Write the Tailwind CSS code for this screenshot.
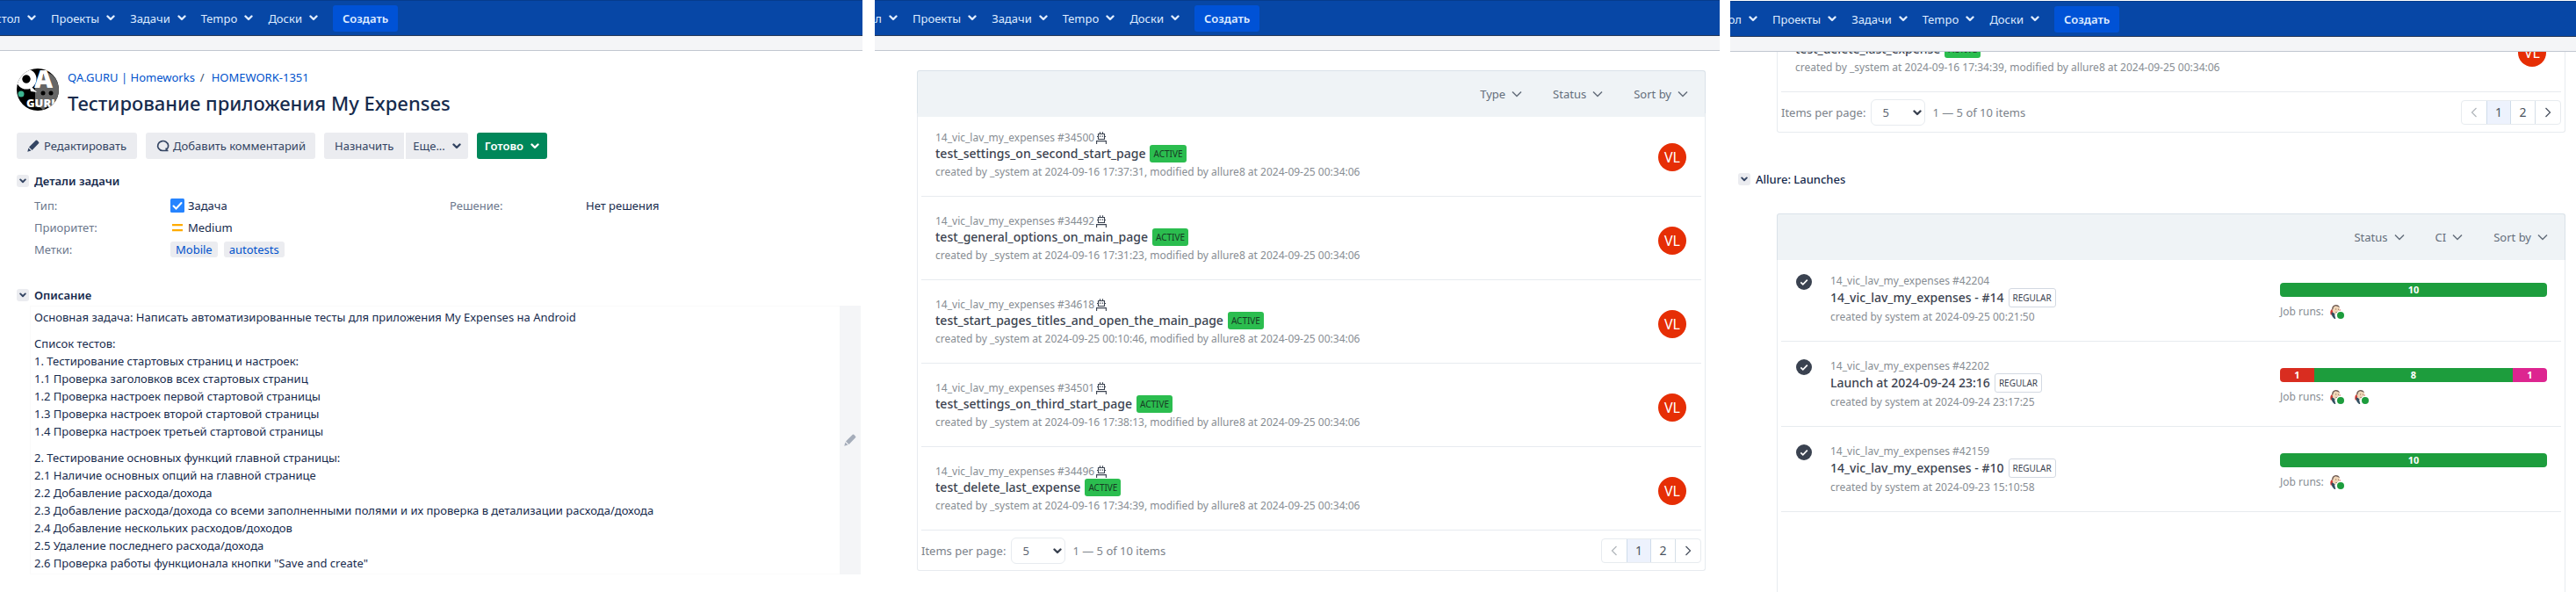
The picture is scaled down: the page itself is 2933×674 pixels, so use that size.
<!DOCTYPE html>
<html lang="ru">
<head>
<meta charset="utf-8">
<title>HOMEWORK-1351</title>
<script src="https://cdn.jsdelivr.net/npm/@tailwindcss/browser@4"></script>
</head>
<body class="bg-white font-['Noto_Sans','Open_Sans',sans-serif] text-[13px] leading-5 text-[#172b4d]">
<svg width="0" height="0" class="absolute" aria-hidden="true">
  <symbol id="chev" viewBox="0 0 10 7"><path d="M1.5 1.5 5 5l3.500-3.500" fill="none" stroke="currentColor" stroke-width="2.400" stroke-linecap="round" stroke-linejoin="round"/></symbol>
  <symbol id="thin" viewBox="0 0 12 8"><path d="M1 1.500 6 6.500l5-5" fill="none" stroke="currentColor" stroke-width="1.500"/></symbol>
  <symbol id="pencil" viewBox="0 0 14 14"><path d="M9.300 1.200a1.500 1.500 0 0 1 2.200-.1l1.300 1.300a1.500 1.500 0 0 1 0 2.200L5.600 12 2 8.400zM1.400 9.500l3.100 3.100L.3 13.700z" fill="currentColor"/></symbol>
  <symbol id="comment" viewBox="0 0 16 14"><path d="M12.800 11A6 5.500 0 1 0 8 12.500h6.500M12.300 9.500v3" fill="none" stroke="currentColor" stroke-width="1.700"/></symbol>
  <symbol id="robot" viewBox="0 0 12 14"><path d="M2.500 2.500h7v6h-7zM4.500.2v2.300M7.500.2v2.300M1 5.500h1.500M9.500 5.500H11M.6 14v-3.400h10.800V14" fill="none" stroke="currentColor" stroke-width="1.100"/><path d="M4 4.500h1.300v1.300H4zM6.700 4.500H8v1.300H6.700z" fill="currentColor"/></symbol>
  <symbol id="done" viewBox="0 0 18 18"><circle cx="9" cy="9" r="9" fill="#3a4250"/><path d="m5.300 9.300 2.500 2.500 5-5.200" fill="none" stroke="#fff" stroke-width="1.700"/></symbol>
  <symbol id="jenkins" viewBox="0 0 16 16">
    <path d="M1.200 5.500Q-.6 9 1 12l2-2 1-5zM10 5l1.800.6-.6 4z" fill="#d33833"/>
    <path d="M1.500 8.500 4 9l3.500 3L8 16H5Q1.500 13.500 1.500 8.500z" fill="#335061"/>
    <path d="M5 10.500 8 11.500V16H6.300z" fill="#fff"/>
    <path d="M2.300 5.500Q2 .5 6.500.2q4.700.2 4.500 5.300L9.500 9.800 6.500 11 3.500 8.600z" fill="#f0d6b7"/>
    <path d="M2.200 6.500Q1.500.8 6.300.1 10 0 11 3.200L9.300 2.200 6.500 1.300Q3.600 2 3.600 4.500z" fill="#6d5a55"/>
    <path d="M6.200 5h1M9 5.200h.9M6.500 8.400q1.500.6 2.700-.4" fill="none" stroke="#5a3a30" stroke-width=".8"/>
    <circle cx="12" cy="12" r="5.500" fill="#fff"/><circle cx="12" cy="12" r="4" fill="#1d9d3d"/>
  </symbol>
</svg>

<div class="flex min-h-screen">

  <!-- Issue page -->
  <section class="mr-[14px] min-w-0 flex-[982_1_0%]">
    <header>
      <nav class="flex h-[41px] items-center gap-[17px] overflow-hidden border-t border-b border-t-[#063c8c] border-b-[#253858] bg-[#0747a6] text-[#deebff]">
        <a href="#" class="flex w-[41px] items-center justify-end gap-2 overflow-hidden">стол<svg class="h-[7px] w-[10px] shrink-0"><use href="#chev"/></svg></a>
        <a href="#" class="flex items-center gap-2">Проекты<svg class="h-[7px] w-[10px]"><use href="#chev"/></svg></a>
        <a href="#" class="flex items-center gap-2">Задачи<svg class="h-[7px] w-[10px]"><use href="#chev"/></svg></a>
        <a href="#" class="flex items-center gap-2">Tempo<svg class="h-[7px] w-[10px]"><use href="#chev"/></svg></a>
        <a href="#" class="flex items-center gap-2">Доски<svg class="h-[7px] w-[10px]"><use href="#chev"/></svg></a>
        <button class="h-[30px] rounded-[3px] bg-[#0052d6] px-[11px] font-semibold">Создать</button>
      </nav>
      <div class="h-[17px] border-b border-[#c1c7d0] bg-[#f4f5f7]"></div>
    </header>
    <main class="pt-5 pr-[2px] pl-[19px]">
      <div class="flex gap-[10px]">
        <svg class="h-12 w-12" viewBox="0 0 48 48" role="img" aria-label="QA.GURU">
          <clipPath id="disc"><circle cx="24" cy="24" r="24"/></clipPath>
          <g clip-path="url(#disc)">
            <path d="M0 0h48v48H0z" fill="#000"/>
            <path d="M21 18 34 4q12 4 14 18v16l-8 8-5-3-5 4-5-4-4 1z" fill="#666"/>
            <circle cx="11" cy="12" r="8" fill="none" stroke="#fff" stroke-width="7"/>
            <circle cx="11" cy="12" r="4.500" fill="#000"/>
            <path d="m14 18 9 9-7-1z" fill="#fff"/>
            <text x="20" y="22" font-family="Open Sans" font-weight="800" font-size="29" fill="#fff">A</text>
            <circle cx="30" cy="28" r="2.500" fill="#000"/><circle cx="39" cy="28" r="2.500" fill="#000"/>
            <circle cx="5" cy="29" r="3.500" fill="#3cb491"/>
            <text x="11" y="44" font-family="Open Sans" font-weight="800" font-size="13" fill="#fff">GURU</text>
          </g>
        </svg>
        <div>
          <div class="flex gap-[6px] text-[#0052cc]"><a href="#">QA.GURU | Homeworks</a><span class="text-[#42526e]">/</span><a href="#" class="ml-[2px]">HOMEWORK-1351</a></div>
          <h1 class="mt-[5px] text-[22px] leading-7 font-medium">Тестирование приложения My Expenses</h1>
        </div>
      </div>
      <div class="mt-5 flex gap-[10px] text-[#344563]">
        <button class="flex h-[30px] items-center gap-[5px] rounded-[3px] bg-[#ebecf0] px-3"><svg class="h-[14px] w-[14px]"><use href="#pencil"/></svg>Редактировать</button>
        <button class="flex h-[30px] items-center gap-1 rounded-[3px] bg-[#ebecf0] px-[11px]"><svg class="h-[14px] w-4"><use href="#comment"/></svg>Добавить комментарий</button>
        <div class="flex gap-[2px]">
          <button class="h-[30px] rounded-l-[3px] bg-[#ebecf0] px-3">Назначить</button>
          <button class="flex h-[30px] items-center gap-2 rounded-r-[3px] bg-[#ebecf0] px-2">Еще...<svg class="h-[7px] w-[10px]"><use href="#chev"/></svg></button>
        </div>
        <button class="flex h-[30px] items-center gap-2 rounded-[3px] bg-[#00875a] px-[9px] font-semibold text-white">Готово<svg class="h-[7px] w-[10px]"><use href="#chev"/></svg></button>
      </div>

      <h2 class="mt-[15px] flex items-center gap-[6px] font-semibold"><button aria-label="Свернуть" class="flex h-[14px] w-[14px] items-center justify-center rounded-[3px] bg-[#ebecf0] text-[#344563]"><svg class="h-[6px] w-2"><use href="#chev"/></svg></button>Детали задачи</h2>
      <dl class="mt-[5px] ml-5 grid auto-rows-[25px] grid-cols-[155px_318px_155px_1fr] items-center">
        <dt class="text-[#6b778c]">Тип:</dt>
        <dd class="flex items-center gap-1"><svg class="h-4 w-4" viewBox="0 0 16 16"><rect width="16" height="16" rx="1.500" fill="#2684ff"/><path d="m3.500 8.500 3 3 6-6.500" fill="none" stroke="#fff" stroke-width="2" stroke-linecap="round"/></svg>Задача</dd>
        <dt class="text-[#6b778c]">Решение:</dt><dd>Нет решения</dd>
        <dt class="text-[#6b778c]">Приоритет:</dt>
        <dd class="col-span-3 flex items-center gap-1"><svg class="h-4 w-4" viewBox="0 0 16 16"><path d="M2 4h12v2.200H2zM2 10h12v2.200H2z" fill="#ffab00"/></svg>Medium</dd>
        <dt class="text-[#6b778c]">Метки:</dt>
        <dd class="col-span-3 flex gap-[7px] leading-[18px] text-[#0052cc]"><a href="#" class="rounded-[3px] bg-[#ebecf0] px-[6px]">Mobile</a><a href="#" class="rounded-[3px] bg-[#ebecf0] px-[6px]">autotests</a></dd>
      </dl>

      <h2 class="mt-[30px] flex items-center gap-[6px] font-semibold"><button aria-label="Свернуть" class="flex h-[14px] w-[14px] items-center justify-center rounded-[3px] bg-[#ebecf0] text-[#344563]"><svg class="h-[6px] w-2"><use href="#chev"/></svg></button>Описание</h2>
      <div class="mt-[2px] ml-[15px] flex">
        <div class="flex grow flex-col gap-[10px] border border-r-0 border-[#fafafa] px-1 py-[2px]">
          <p>Основная задача: Написать автоматизированные тесты для приложения My Expenses на Android</p>
          <p>Список тестов:<br>1. Тестирование стартовых страниц и настроек:<br>1.1 Проверка заголовков всех стартовых страниц<br>1.2 Проверка настроек первой стартовой страницы<br>1.3 Проверка настроек второй стартовой страницы<br>1.4 Проверка настроек третьей стартовой страницы</p>
          <p>2. Тестирование основных функций главной страницы:<br>2.1 Наличие основных опций на главной странице<br>2.2 Добавление расхода/дохода<br>2.3 Добавление расхода/дохода со всеми заполненными полями и их проверка в детализации расхода/дохода<br>2.4 Добавление нескольких расходов/доходов<br>2.5 Удаление последнего расхода/дохода<br>2.6 Проверка работы функционала кнопки "Save and create"</p>
        </div>
        <button aria-label="Изменить описание" class="flex w-6 items-center justify-center bg-[#f4f5f7] text-[#a5adba]"><svg class="h-[14px] w-[14px]"><use href="#pencil"/></svg></button>
      </div>
    </main>
  </section>

  <!-- Allure: test cases -->
  <section class="mr-3 min-w-0 flex-[962_1_0%]">
    <header>
      <nav class="flex h-[41px] items-center gap-[17px] overflow-hidden border-t border-b border-t-[#063c8c] border-b-[#253858] bg-[#0747a6] text-[#deebff]">
        <a href="#" class="flex w-[26px] items-center justify-end gap-2 overflow-hidden">стол<svg class="h-[7px] w-[10px] shrink-0"><use href="#chev"/></svg></a>
        <a href="#" class="flex items-center gap-2">Проекты<svg class="h-[7px] w-[10px]"><use href="#chev"/></svg></a>
        <a href="#" class="flex items-center gap-2">Задачи<svg class="h-[7px] w-[10px]"><use href="#chev"/></svg></a>
        <a href="#" class="flex items-center gap-2">Tempo<svg class="h-[7px] w-[10px]"><use href="#chev"/></svg></a>
        <a href="#" class="flex items-center gap-2">Доски<svg class="h-[7px] w-[10px]"><use href="#chev"/></svg></a>
        <button class="h-[30px] rounded-[3px] bg-[#0052d6] px-[11px] font-semibold">Создать</button>
      </nav>
      <div class="h-[17px] border-b border-[#c1c7d0] bg-[#f4f5f7]"></div>
    </header>
    <main class="pt-[22px] pr-4 pl-12">
      <div class="flex h-[53px] items-center justify-end gap-[35px] rounded-t-[3px] border border-b-0 border-[#dae2e9] bg-[#eff3f6] pr-[19px] text-[#646e7b]">
        <button class="flex items-center gap-[7px]">Type<svg class="h-2 w-3"><use href="#thin"/></svg></button>
        <button class="flex items-center gap-[7px]">Status<svg class="h-2 w-3"><use href="#thin"/></svg></button>
        <button class="flex items-center gap-[7px]">Sort by<svg class="h-2 w-3"><use href="#thin"/></svg></button>
      </div>
      <div class="rounded-b-[3px] border border-t-0 border-[#e7ebef] px-1">
        <ul class="-mt-1 text-xs leading-4 text-[#878d93]">
          <li class="flex justify-between border-b border-[#e7ebef] pt-5 pr-[17px] pb-[19px] pl-4">
            <div><div class="flex items-center gap-[2px]">14_vic_lav_my_expenses #34500<svg class="h-[14px] w-3 text-[#3a4250]"><use href="#robot"/></svg></div>
              <div class="flex h-5 items-center gap-[5px]"><a href="#" class="text-sm font-medium text-[#3c4350]">test_settings_on_second_start_page</a><span class="rounded-[3px] bg-[#2bbd4f] px-1 text-[10px] leading-5 text-[#173a24]">ACTIVE</span></div>
              <p class="mt-[3px]">created by _system at 2024-09-16 17:37:31, modified by allure8 at 2024-09-25 00:34:06</p></div>
            <span class="mt-1 flex h-8 w-8 items-center justify-center self-center rounded-full bg-[#e62e05] text-base text-white">VL</span>
          </li>
          <li class="flex justify-between border-b border-[#e7ebef] pt-5 pr-[17px] pb-[19px] pl-4">
            <div><div class="flex items-center gap-[2px]">14_vic_lav_my_expenses #34492<svg class="h-[14px] w-3 text-[#3a4250]"><use href="#robot"/></svg></div>
              <div class="flex h-5 items-center gap-[5px]"><a href="#" class="text-sm font-medium text-[#3c4350]">test_general_options_on_main_page</a><span class="rounded-[3px] bg-[#2bbd4f] px-1 text-[10px] leading-5 text-[#173a24]">ACTIVE</span></div>
              <p class="mt-[3px]">created by _system at 2024-09-16 17:31:23, modified by allure8 at 2024-09-25 00:34:06</p></div>
            <span class="mt-1 flex h-8 w-8 items-center justify-center self-center rounded-full bg-[#e62e05] text-base text-white">VL</span>
          </li>
          <li class="flex justify-between border-b border-[#e7ebef] pt-5 pr-[17px] pb-[19px] pl-4">
            <div><div class="flex items-center gap-[2px]">14_vic_lav_my_expenses #34618<svg class="h-[14px] w-3 text-[#3a4250]"><use href="#robot"/></svg></div>
              <div class="flex h-5 items-center gap-[5px]"><a href="#" class="text-sm font-medium text-[#3c4350]">test_start_pages_titles_and_open_the_main_page</a><span class="rounded-[3px] bg-[#2bbd4f] px-1 text-[10px] leading-5 text-[#173a24]">ACTIVE</span></div>
              <p class="mt-[3px]">created by _system at 2024-09-25 00:10:46, modified by allure8 at 2024-09-25 00:34:06</p></div>
            <span class="mt-1 flex h-8 w-8 items-center justify-center self-center rounded-full bg-[#e62e05] text-base text-white">VL</span>
          </li>
          <li class="flex justify-between border-b border-[#e7ebef] pt-5 pr-[17px] pb-[19px] pl-4">
            <div><div class="flex items-center gap-[2px]">14_vic_lav_my_expenses #34501<svg class="h-[14px] w-3 text-[#3a4250]"><use href="#robot"/></svg></div>
              <div class="flex h-5 items-center gap-[5px]"><a href="#" class="text-sm font-medium text-[#3c4350]">test_settings_on_third_start_page</a><span class="rounded-[3px] bg-[#2bbd4f] px-1 text-[10px] leading-5 text-[#173a24]">ACTIVE</span></div>
              <p class="mt-[3px]">created by _system at 2024-09-16 17:38:13, modified by allure8 at 2024-09-25 00:34:06</p></div>
            <span class="mt-1 flex h-8 w-8 items-center justify-center self-center rounded-full bg-[#e62e05] text-base text-white">VL</span>
          </li>
          <li class="flex justify-between border-b border-[#e7ebef] pt-5 pr-[17px] pb-[19px] pl-4">
            <div><div class="flex items-center gap-[2px]">14_vic_lav_my_expenses #34496<svg class="h-[14px] w-3 text-[#3a4250]"><use href="#robot"/></svg></div>
              <div class="flex h-5 items-center gap-[5px]"><a href="#" class="text-sm font-medium text-[#3c4350]">test_delete_last_expense</a><span class="rounded-[3px] bg-[#2bbd4f] px-1 text-[10px] leading-5 text-[#173a24]">ACTIVE</span></div>
              <p class="mt-[3px]">created by _system at 2024-09-16 17:34:39, modified by allure8 at 2024-09-25 00:34:06</p></div>
            <span class="mt-1 flex h-8 w-8 items-center justify-center self-center rounded-full bg-[#e62e05] text-base text-white">VL</span>
          </li>
        </ul>
        <div class="flex items-center pt-2 pb-[7px] text-[#7b828a]">
          <label for="per-page-1">Items per page:</label>
          <div class="relative ml-[6px] text-[#5a626e]"><select id="per-page-1" class="h-[30px] w-[62px] appearance-none rounded-md border border-[#e7ebef] bg-white pl-3"><option>5</option></select><svg class="pointer-events-none absolute top-3 right-1 h-[7px] w-[10px] text-[#3a4250]"><use href="#chev"/></svg></div>
          <span class="ml-2">1 — 5 of 10 items</span>
          <div class="ml-auto flex h-7 rounded border border-[#e7ebef] text-sm text-[#4b5360]">
            <button disabled aria-label="Previous" class="flex w-7 items-center justify-center text-[#b3b8bd]"><svg class="h-[12px] w-2" viewBox="0 0 8 12"><path d="M6.500 1 1.500 6l5 5" fill="none" stroke="currentColor" stroke-width="1.300"/></svg></button>
            <button class="w-7 border-x border-[#cfdcea] bg-[#edf2fd]">1</button>
            <button class="w-7 border-r border-[#d5dfe8]">2</button>
            <button aria-label="Next" class="flex w-7 items-center justify-center"><svg class="h-[12px] w-2" viewBox="0 0 8 12"><path d="m1.500 1 5 5-5 5" fill="none" stroke="currentColor" stroke-width="1.300"/></svg></button>
          </div>
        </div>
      </div>
    </main>
  </section>

  <!-- Allure: launches -->
  <section class="flex min-w-0 flex-[963_1_0%] flex-col pt-px">
    <header>
      <nav class="flex h-[41px] items-center gap-[17px] overflow-hidden border-t border-b border-t-[#063c8c] border-b-[#253858] bg-[#0747a6] text-[#deebff]">
        <a href="#" class="flex w-[31px] items-center justify-end gap-2 overflow-hidden">стол<svg class="h-[7px] w-[10px] shrink-0"><use href="#chev"/></svg></a>
        <a href="#" class="flex items-center gap-2">Проекты<svg class="h-[7px] w-[10px]"><use href="#chev"/></svg></a>
        <a href="#" class="flex items-center gap-2">Задачи<svg class="h-[7px] w-[10px]"><use href="#chev"/></svg></a>
        <a href="#" class="flex items-center gap-2">Tempo<svg class="h-[7px] w-[10px]"><use href="#chev"/></svg></a>
        <a href="#" class="flex items-center gap-2">Доски<svg class="h-[7px] w-[10px]"><use href="#chev"/></svg></a>
        <button class="h-[30px] rounded-[3px] bg-[#0052d6] px-[11px] font-semibold">Создать</button>
      </nav>
      <div class="h-[17px] border-b border-[#c1c7d0] bg-[#f4f5f7]"></div>
    </header>
    <main class="flex grow flex-col pr-3 pl-[9px]">
      <div class="ml-11 rounded-b-[3px] border border-t-0 border-[#e7ebef] px-1">
        <!-- Last row, scrolled partly under the header -->
        <div class="flex h-[46px] flex-col justify-end overflow-hidden text-xs leading-4 text-[#878d93]">
          <div class="flex shrink-0 justify-between border-b border-[#e7ebef] pt-5 pr-[17px] pb-[19px] pl-4">
            <div><div class="h-4"></div>
              <div class="flex h-5 items-center gap-[5px]"><a href="#" class="text-sm font-medium text-[#3c4350]">test_delete_last_expense</a><span class="rounded-[3px] bg-[#2bbd4f] px-1 text-[10px] leading-5 text-[#173a24]">ACTIVE</span></div>
              <p class="mt-[3px]">created by _system at 2024-09-16 17:34:39, modified by allure8 at 2024-09-25 00:34:06</p></div>
            <span class="mt-1 flex h-8 w-8 items-center justify-center self-center rounded-full bg-[#e62e05] text-base text-white">VL</span>
          </div>
        </div>
        <div class="flex items-center pt-2 pb-[7px] text-[#7b828a]">
          <label for="per-page-2">Items per page:</label>
          <div class="relative ml-[6px] text-[#5a626e]"><select id="per-page-2" class="h-[30px] w-[62px] appearance-none rounded-md border border-[#e7ebef] bg-white pl-3"><option>5</option></select><svg class="pointer-events-none absolute top-3 right-1 h-[7px] w-[10px] text-[#3a4250]"><use href="#chev"/></svg></div>
          <span class="ml-2">1 — 5 of 10 items</span>
          <div class="ml-auto flex h-7 rounded border border-[#e7ebef] text-sm text-[#4b5360]">
            <button disabled aria-label="Previous" class="flex w-7 items-center justify-center text-[#b3b8bd]"><svg class="h-[12px] w-2" viewBox="0 0 8 12"><path d="M6.500 1 1.500 6l5 5" fill="none" stroke="currentColor" stroke-width="1.300"/></svg></button>
            <button class="w-7 border-x border-[#cfdcea] bg-[#edf2fd]">1</button>
            <button class="w-7 border-r border-[#d5dfe8]">2</button>
            <button aria-label="Next" class="flex w-7 items-center justify-center"><svg class="h-[12px] w-2" viewBox="0 0 8 12"><path d="m1.500 1 5 5-5 5" fill="none" stroke="currentColor" stroke-width="1.300"/></svg></button>
          </div>
        </div>
      </div>

      <h2 class="mt-[43px] flex items-center gap-[6px] font-medium"><button aria-label="Свернуть" class="flex h-[14px] w-[14px] items-center justify-center rounded-[3px] bg-[#ebecf0] text-[#344563]"><svg class="h-[6px] w-2"><use href="#chev"/></svg></button>Allure: Launches</h2>

      <div class="mt-[29px] ml-11 flex h-[53px] items-center justify-end gap-[35px] rounded-t-[3px] border border-b-0 border-[#dae2e9] bg-[#eff3f6] pr-[19px] text-[#646e7b]">
        <button class="flex items-center gap-[7px]">Status<svg class="h-2 w-3"><use href="#thin"/></svg></button>
        <button class="flex items-center gap-[7px]">CI<svg class="h-2 w-3"><use href="#thin"/></svg></button>
        <button class="flex items-center gap-[7px]">Sort by<svg class="h-2 w-3"><use href="#thin"/></svg></button>
      </div>
      <div class="ml-11 grow border-x border-[#e7ebef] px-1">
        <ul class="-mt-1 text-xs leading-4 text-[#878d93]">
          <li class="flex border-b border-[#e7ebef] pt-5 pr-4 pb-[19px] pl-[17px]">
            <svg class="mr-[21px] h-[18px] w-[18px]"><use href="#done"/></svg>
            <div><p>14_vic_lav_my_expenses #42204</p>
              <div class="flex h-[22px] items-center gap-[5px]"><a href="#" class="text-sm font-medium text-[#3c4350]">14_vic_lav_my_expenses - #14</a><span class="rounded-[3px] border border-[#d3d9e2] px-1 text-[10px] leading-5 text-[#3c4350]">REGULAR</span></div>
              <p class="mt-[3px]">created by system at 2024-09-25 00:21:50</p></div>
            <div class="ml-auto w-[304px] pt-[10px]">
              <div class="flex overflow-hidden rounded text-center text-[11px] font-bold text-white"><span class="grow bg-[#1d9d3d]">10</span></div>
              <div class="mt-[9px] flex items-center">Job runs:<svg class="ml-[7px] h-4 w-4"><use href="#jenkins"/></svg></div>
            </div>
          </li>
          <li class="flex border-b border-[#e7ebef] pt-5 pr-4 pb-[19px] pl-[17px]">
            <svg class="mr-[21px] h-[18px] w-[18px]"><use href="#done"/></svg>
            <div><p>14_vic_lav_my_expenses #42202</p>
              <div class="flex h-[22px] items-center gap-[5px]"><a href="#" class="text-sm font-medium text-[#3c4350]">Launch at 2024-09-24 23:16</a><span class="rounded-[3px] border border-[#d3d9e2] px-1 text-[10px] leading-5 text-[#3c4350]">REGULAR</span></div>
              <p class="mt-[3px]">created by system at 2024-09-24 23:17:25</p></div>
            <div class="ml-auto w-[304px] pt-[10px]">
              <div class="flex overflow-hidden rounded text-center text-[11px] font-bold text-white"><span class="w-[39px] bg-[#d92d20]">1</span><span class="grow bg-[#1d9d3d]">8</span><span class="w-[39px] bg-[#dd2590]">1</span></div>
              <div class="mt-[9px] flex items-center">Job runs:<svg class="ml-[7px] h-4 w-4"><use href="#jenkins"/></svg><svg class="ml-3 h-4 w-4"><use href="#jenkins"/></svg></div>
            </div>
          </li>
          <li class="flex border-b border-[#e7ebef] pt-5 pr-4 pb-[19px] pl-[17px]">
            <svg class="mr-[21px] h-[18px] w-[18px]"><use href="#done"/></svg>
            <div><p>14_vic_lav_my_expenses #42159</p>
              <div class="flex h-[22px] items-center gap-[5px]"><a href="#" class="text-sm font-medium text-[#3c4350]">14_vic_lav_my_expenses - #10</a><span class="rounded-[3px] border border-[#d3d9e2] px-1 text-[10px] leading-5 text-[#3c4350]">REGULAR</span></div>
              <p class="mt-[3px]">created by system at 2024-09-23 15:10:58</p></div>
            <div class="ml-auto w-[304px] pt-[10px]">
              <div class="flex overflow-hidden rounded text-center text-[11px] font-bold text-white"><span class="grow bg-[#1d9d3d]">10</span></div>
              <div class="mt-[9px] flex items-center">Job runs:<svg class="ml-[7px] h-4 w-4"><use href="#jenkins"/></svg></div>
            </div>
          </li>
        </ul>
      </div>
    </main>
  </section>
</div>
</body>
</html>
